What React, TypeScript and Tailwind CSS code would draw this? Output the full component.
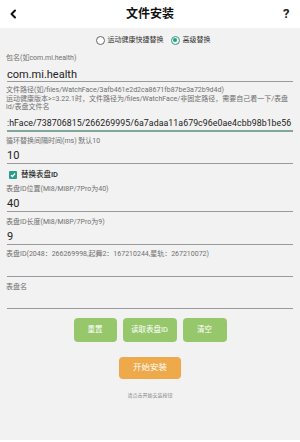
import React from "react";

const font = { fontFamily: "Roboto, 'Noto Sans CJK SC', sans-serif" };

function Label({ children, className = "" }: { children: React.ReactNode; className?: string }) {
  return <div className={`h-[8px] text-[7px] leading-[8px] text-[#707070] whitespace-nowrap ${className}`}>{children}</div>;
}

function Field({ value, focused = false, small = false, className = "" }: { value?: string; focused?: boolean; small?: boolean; className?: string }) {
  return (
    <div className={`px-[1px] ${className}`}>
      <div
        className={`h-[12px] flex items-center whitespace-nowrap text-[#222] ${
          small ? "text-[8.8px] tracking-[0.05px]" : "text-[11px]"
        }`}
      >
        {value}
      </div>
      <div className={focused ? "h-[2px] bg-[#7fa79c]" : "h-px bg-[#9a9a9a]"} />
    </div>
  );
}

export default function App() {
  return (
    <div style={font} className="w-[300px] h-[442px] bg-white flex flex-col">
      <header className="h-[28px] shrink-0 flex items-center justify-between px-[9px] bg-white">
        <svg width="8" height="10" viewBox="0 0 8 10" aria-hidden>
          <path d="M6 1.5 2.5 5 6 8.5" fill="none" stroke="#111" strokeWidth="2" strokeLinecap="round" strokeLinejoin="round" />
        </svg>
        <h1 className="text-[12px] font-bold text-[#111]">文件安装</h1>
        <span className="text-[13px] font-bold text-[#222] w-[8px]">?</span>
      </header>

      <main className="h-[412px] bg-[#f2f2f2] px-[6px] flex flex-col">
        <div className="h-[24px] shrink-0 flex items-center justify-center gap-[3px] text-[7px] text-[#333] pl-[6px]">
          <span className="w-[9px] h-[9px] rounded-full border border-[#666] bg-white" />
          <span className="mr-[4px]">运动健康快捷替换</span>
          <span className="w-[9px] h-[9px] rounded-full border-[1.5px] border-[#2b9d8a] flex items-center justify-center">
            <span className="w-[4px] h-[4px] rounded-full bg-[#2b9d8a]" />
          </span>
          <span>高级替换</span>
        </div>

        <Label className="mt-[2px]">包名(如com.mi.health)</Label>
        <Field value="com.mi.health" className="mt-[7px]" />

        <div className="mt-[4px] text-[7px] leading-[8.5px] text-[#707070] whitespace-nowrap">
          <div>文件路径(如/files/WatchFace/3afb461e2d2ca8671fb87be3a72b9d4d)</div>
          <div>运动健康版本&gt;=3.22.1时，文件路径为/files/WatchFace/非固定路径，需要自己看一下/表盘</div>
          <div>id/表盘文件名</div>
        </div>
        <Field
          value=":hFace/738706815/266269995/6a7adaa11a679c96e0ae4cbb98b1be56"
          focused
          small
          className="mt-[6px]"
        />

        <Label className="mt-[5px]">循环替换间隔时间(ms) 默认10</Label>
        <Field value="10" className="mt-[6px]" />

        <div className="mt-[4px] h-[14px] shrink-0 flex items-center gap-[4px] pl-[3px]">
          <span className="w-[8px] h-[8px] rounded-[1px] bg-[#2b9d8a] flex items-center justify-center">
            <svg width="6" height="6" viewBox="0 0 6 6" aria-hidden>
              <path d="M1 3.1 2.4 4.5 5 1.5" fill="none" stroke="white" strokeWidth="1.2" />
            </svg>
          </span>
          <span className="text-[7.5px] font-medium text-[#222]">替换表盘ID</span>
        </div>

        <Label className="mt-[3px]">表盘ID位置(Mi8/Mi8P/7Pro为40)</Label>
        <Field value="40" className="mt-[6px]" />

        <Label className="mt-[6px]">表盘ID长度(Mi8/Mi8P/7Pro为9)</Label>
        <Field value="9" className="mt-[6px]" />

        <Label className="mt-[5px]">表盘ID(2048：266269998,起舞2：167210244,星轨：267210072)</Label>
        <Field className="mt-[6px]" />

        <Label className="mt-[6px]">表盘名</Label>
        <Field className="mt-[5px]" />

        <div className="mt-[9px] flex justify-center gap-[6px]">
          {[
            ["重置", "w-[43px]"],
            ["读取表盘ID", "w-[54px]"],
            ["清空", "w-[44px]"],
          ].map(([t, w]) => (
            <button
              key={t}
              type="button"
              className={`${w} h-[24px] rounded-[4px] bg-[#96c76b] text-white text-[7.5px]`}
            >
              {t}
            </button>
          ))}
        </div>

        <div className="mt-[15px] flex justify-center">
          <button type="button" className="w-[62px] h-[22px] rounded-[4px] bg-[#eda94a] text-white text-[8.5px]">
            开始安装
          </button>
        </div>

        <div className="mt-[13px] text-center text-[5px] leading-[6px] text-[#888]">请点击开始安装按钮</div>
      </main>
    </div>
  );
}
